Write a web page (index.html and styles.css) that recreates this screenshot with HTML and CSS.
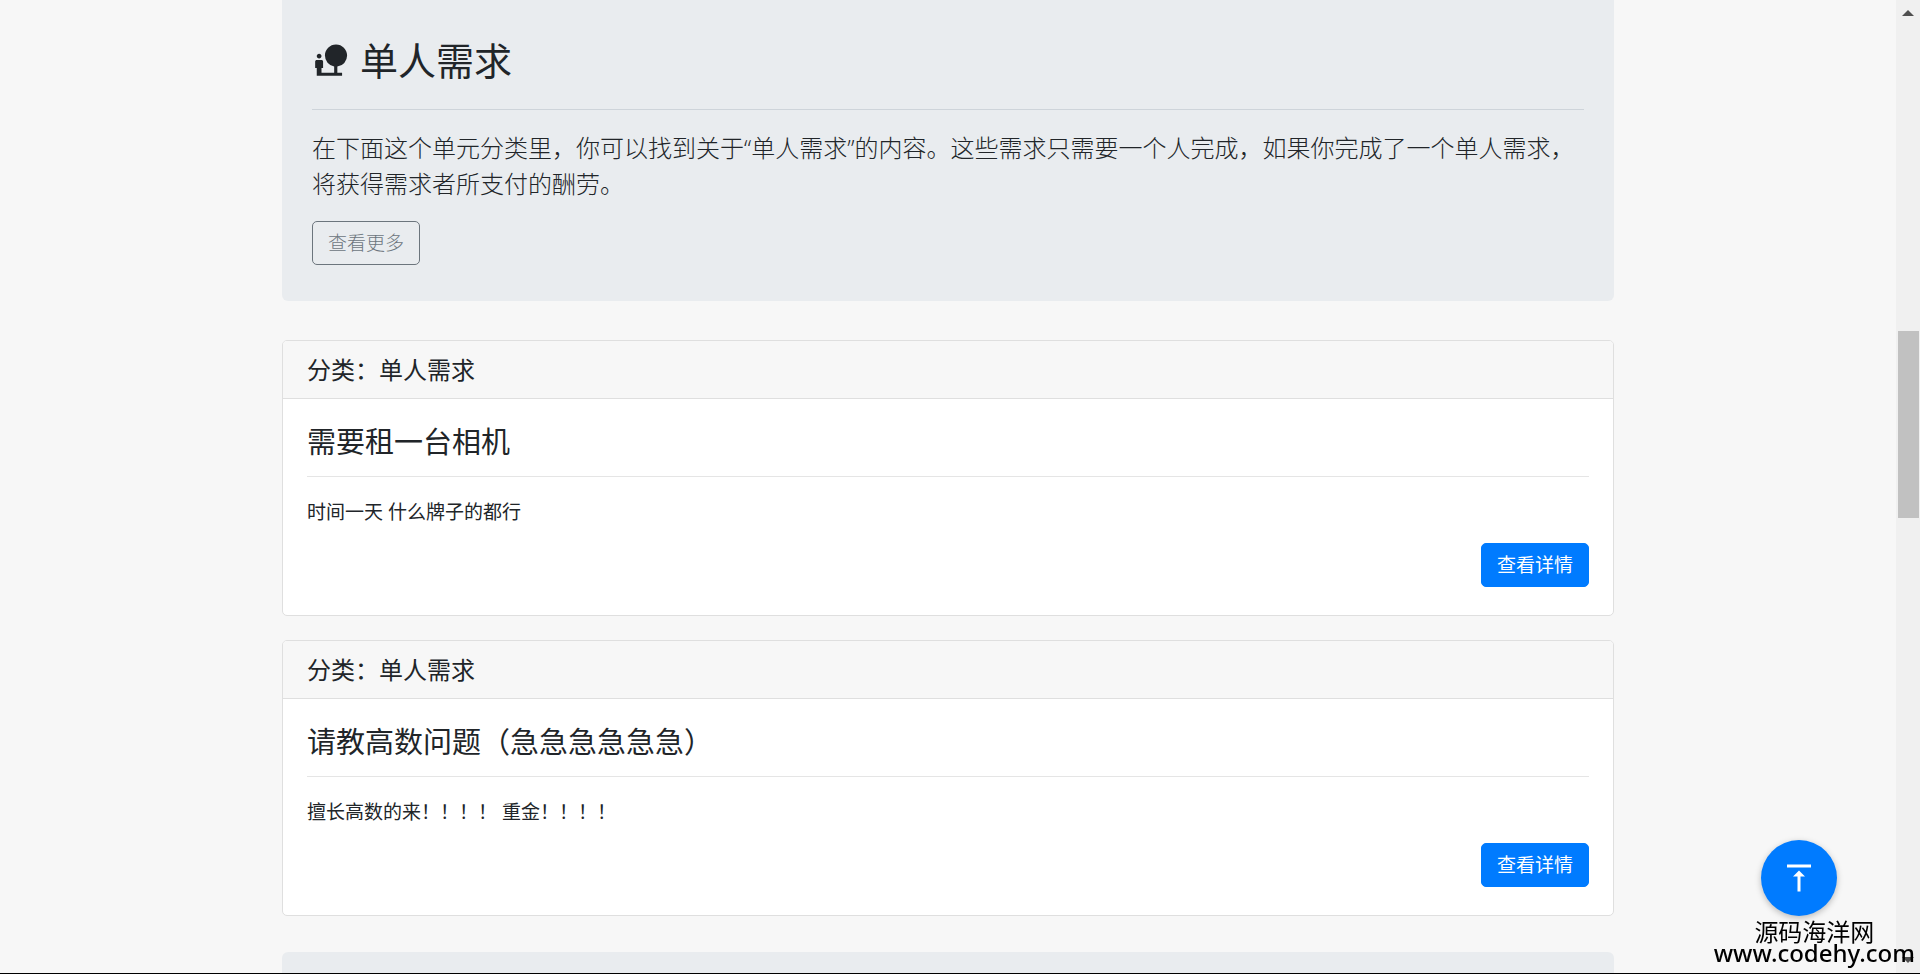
FILE: index.html
```html
<!DOCTYPE html>
<html lang="zh-CN">
<head>
<meta charset="utf-8">
<title>单人需求</title>
<link rel="stylesheet" href="styles.css">
</head>
<body>
<div class="page">
  <main class="content">
    <div class="container">
      <section class="jumbotron">
        <h2 class="jumbotron-title">
          <svg class="title-icon" viewBox="0 0 24 24" aria-hidden="true"><path d="M22.17 9.17c0-3.87-3.13-7-7-7s-7 3.13-7 7A6.98 6.98 0 0 0 14 16.06V20H6v-3h1v-4c0-.55-.45-1-1-1H3c-.55 0-1 .45-1 1v4h1v5h16v-2h-3v-3.88a7 7 0 0 0 6.17-6.95zM4.5 11c.83 0 1.5-.67 1.5-1.5S5.33 8 4.5 8 3 8.67 3 9.5 3.67 11 4.5 11z"/></svg>
          <span>单人需求</span>
        </h2>
        <hr class="divider">
        <p class="lead">在下面这个单元分类里，你可以找到关于“单人需求”的内容。这些需求只需要一个人完成，如果你完成了一个单人需求，将获得需求者所支付的酬劳。</p>
        <a class="btn btn-outline" href="#more">查看更多</a>
      </section>

      <div class="cards">
        <article class="card">
          <header class="card-header">分类：单人需求</header>
          <div class="card-body">
            <h4 class="card-title">需要租一台相机</h4>
            <hr class="divider">
            <p class="card-text">时间一天 什么牌子的都行</p>
            <a class="btn btn-primary" href="#detail-1">查看详情</a>
          </div>
        </article>
        <article class="card">
          <header class="card-header">分类：单人需求</header>
          <div class="card-body">
            <h4 class="card-title">请教高数问题（急急急急急急）</h4>
            <hr class="divider">
            <p class="card-text">擅长高数的来！！！！ 重金！！！！</p>
            <a class="btn btn-primary" href="#detail-2">查看详情</a>
          </div>
        </article>
      </div>

      <section class="jumbotron"></section>
    </div>
  </main>
  <div class="scrollbar" aria-hidden="true">
    <svg class="scroll-arrow" viewBox="0 0 12 6"><path d="M6 0l6 6H0z"/></svg>
    <div class="scroll-track"><div class="scroll-thumb"></div></div>
    <svg class="scroll-arrow" viewBox="0 0 12 6"><path d="M0 0h12L6 6z"/></svg>
  </div>
</div>

<button class="to-top" type="button" aria-label="返回顶部">
  <svg class="to-top-icon" viewBox="0 0 24 24" aria-hidden="true"><path d="M8 11h3v10h2V11h3l-4-4-4 4zM4 3v2h16V3H4z"/></svg>
</button>
<div class="watermark">
  <span>源码海洋网</span>
  <span class="watermark-url">www.codehy.com</span>
</div>
</body>
</html>
```

FILE: styles.css
```css
* {
  box-sizing: border-box;
}

body {
  margin: 0;
  background: #f7f7f7;
  color: #212529;
  font-family: "Open Sans", "Noto Sans CJK SC", sans-serif;
  font-size: 19px;
  font-weight: 400;
  line-height: 29px;
}

.page {
  display: flex;
  height: 100vh;
  overflow: hidden;
  border-bottom: 1px solid #000;
}

.content {
  flex: 1;
  min-width: 0;
}

.container {
  max-width: 1332px;
  margin: 0 auto;
}

.jumbotron {
  padding: 36px 30px;
  border-radius: 0 0 6px 6px;
  background: #e9ecef;
}

.cards + .jumbotron {
  border-radius: 6px 6px 0 0;
}

.jumbotron-title {
  display: flex;
  align-items: center;
  gap: 10px;
  margin: 0;
  font-size: 38px;
  font-weight: 400;
  line-height: 48px;
}

.title-icon {
  width: 38px;
  height: 38px;
  fill: currentColor;
}

.divider {
  height: 1px;
  margin: 17px 0 21px;
  border: 0;
  background: #e5e5e5;
}

.jumbotron .divider {
  margin: 25px 0 20px;
  background: #ced4da;
}

.lead {
  margin: 0 0 19px;
  font-size: 24px;
  font-weight: 300;
  line-height: 36px;
}

.btn {
  display: inline-block;
  padding: 7px 15px;
  border: 1px solid;
  border-radius: 5px;
  line-height: 28px;
  text-decoration: none;
}

.btn-outline {
  border-color: #6c757d;
  color: #6c757d;
  font-weight: 300;
}

.btn-primary {
  align-self: flex-end;
  border-color: #007bff;
  background: #007bff;
  color: #fff;
}

.cards {
  display: flex;
  flex-direction: column;
  gap: 24px;
  padding: 39px 0 36px;
}

.card {
  border: 1px solid #dfdfdf;
  border-radius: 5px;
  background: #fff;
}

.card-header {
  padding: 14px 24px;
  border-bottom: 1px solid #dfdfdf;
  border-radius: 4px 4px 0 0;
  background: #f7f7f7;
  font-size: 24px;
  line-height: 29px;
}

.card-body {
  display: flex;
  flex-direction: column;
  padding: 25px 24px 28px;
}

.card-title {
  margin: 0;
  font-size: 29px;
  font-weight: 400;
  line-height: 35px;
}

.card-text {
  margin: 0 0 16px;
}

.scrollbar {
  display: flex;
  flex-direction: column;
  align-items: center;
  width: 24px;
  padding: 10px 0;
  background: #f0f0f0;
}

.scroll-arrow {
  width: 12px;
  height: 6px;
  fill: #505050;
}

.scroll-track {
  flex: 1;
  width: 21px;
  padding-top: 315px;
}

.scroll-thumb {
  height: 187px;
  background: #c1c1c1;
}

.to-top {
  position: fixed;
  right: 83px;
  bottom: 58px;
  display: grid;
  place-items: center;
  width: 76px;
  height: 76px;
  padding: 0;
  border: 0;
  border-radius: 50%;
  background: #007bff;
  box-shadow: 0 2px 6px rgba(0, 0, 0, 0.25);
}

.to-top-icon {
  width: 36px;
  height: 36px;
  fill: #fff;
}

.watermark {
  position: fixed;
  right: 5px;
  bottom: 11px;
  display: flex;
  flex-direction: column;
  align-items: center;
  color: #000;
  font-size: 24px;
  line-height: 21px;
}

.watermark-url {
  font-family: "Noto Sans", sans-serif;
  font-weight: 500;
}
```
